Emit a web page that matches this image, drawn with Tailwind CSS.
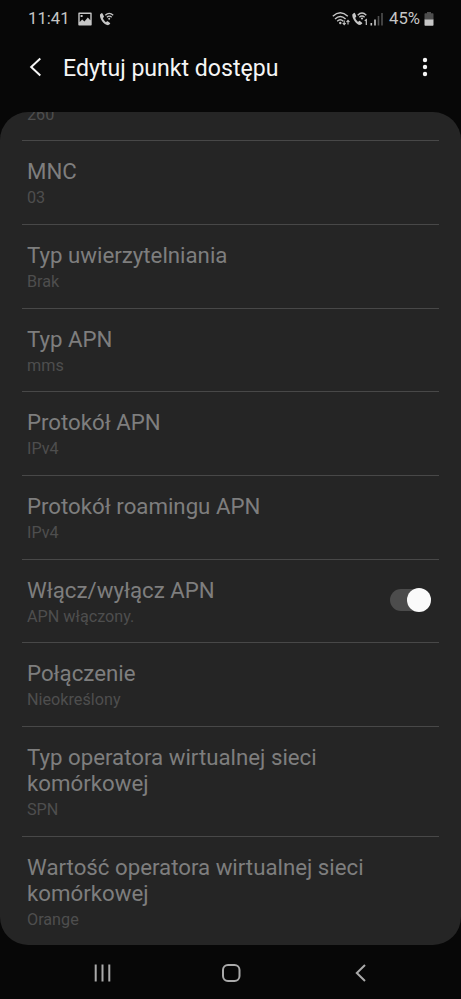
<!DOCTYPE html>
<html lang="pl">
<head>
<meta charset="utf-8">
<title>Edytuj punkt dostępu</title>
<script src="https://cdn.jsdelivr.net/npm/@tailwindcss/browser@4"></script>
</head>
<body class="bg-[#070707]">
<div class="w-[461px] h-[999px] flex flex-col overflow-hidden bg-[#070707] font-[Roboto,sans-serif]">
  <header class="h-[38px] shrink-0 flex items-center pl-7 pr-[27px] text-[16.700px] leading-none text-[#c6c6c6]">
    <span class="w-[41px] pt-px">11:41</span>
    <svg class="ml-[9px]" width="14" height="14" viewBox="0 0 14 14"><path fill="#c6c6c6" fill-rule="evenodd" d="M1 .5h12q.7 0 .7.7v11.6q0 .7-.7.7H1q-.7 0-.7-.7V1.200Q.3.5 1 .5ZM1.700 1.900v8.200l2.500-2.700 2.200 2 3.400-3.800 2.500 2.700V1.900ZM2.600 3h2v2h-2Z"/></svg>
    <svg class="ml-[7px]" width="15" height="14" viewBox="0 0 15 14" fill="none" stroke="#c6c6c6"><path fill="#c6c6c6" stroke="none" d="M2.400 1.200 1 2.500C.3 6.500 4.800 12.700 9 13.200l2-1.200q.4-.5 0-1L8.700 9.300q-.5-.3-1 .1l-.8.8C5.500 9.300 4.300 7.500 3.900 6l.8-.8q.4-.4.200-.9L3.500 1.400q-.4-.6-1.100-.2Z"/><path stroke-width="1.300" d="M6.300 3.300Q10.200-.5 14.200 3.300M7.900 5.200Q10.200 3 12.700 5.200"/><circle cx="10.200" cy="6.700" r="1" fill="#c6c6c6" stroke="none"/></svg>
    <div class="ml-auto flex items-center">
      <svg width="54" height="16" viewBox="0 0 54 16" fill="none" stroke="#c6c6c6">
        <path stroke-width="1.400" d="M.8 5.300Q8.300-1.700 15.800 5.300M3 7.900Q8.300 3 13.600 7.900M5.200 10.200Q8.300 7.400 11.200 10.200"/><circle cx="8.300" cy="12" r="1.200" fill="#c6c6c6" stroke="none"/>
        <path stroke-width="1.100" d="M12.200 9.500v4M10.700 12l1.500 1.700 1.500-1.700M16 13.500v-4M14.500 11 16 9.300 17.500 11"/>
        <path fill="#c6c6c6" stroke="none" d="M21.900 2 20.300 3.400c-.4 3.800 3.700 10 7.800 10.600l2-1.300q.4-.5 0-1L27.900 10q-.5-.3-1 .1l-.8.8c-1.300-.8-2.500-2.600-2.900-4.100l.8-.8q.4-.4.200-.9L23 2.200q-.4-.6-1.100-.2Z"/>
        <path stroke-width="1.400" d="M25.700 4.200Q30 0 34.300 4.200M27.400 6.200Q30 3.800 32.600 6.200"/><circle cx="30" cy="7.500" r="1.100" fill="#c6c6c6" stroke="none"/>
        <path stroke-width="1.200" d="M32.700 9.700 34.300 8.600V14"/>
        <path stroke-width="1.600" d="M39.300 12V14.500M43 8.500V14.500"/><path stroke="#505050" stroke-width="1.600" d="M46.500 5V14.500M50 2V14.500"/>
      </svg>
      <span class="ml-[3px] pt-px">45%</span>
      <svg class="ml-[4px]" width="10" height="14" viewBox="0 0 10 14"><path fill="#4e4e4e" d="M3 0h4v1.300h1.800q.7 0 .7.700V8H.5V2q0-.7.7-.7H3Z"/><path fill="#c6c6c6" d="M.5 7.500h9V13q0 .7-.7.700H1.200q-.7 0-.7-.7Z"/></svg>
    </div>
  </header>
  <div class="h-[74px] shrink-0 flex items-start pt-[15px] pl-[29px] pr-[33px]">
    <svg class="mt-[4px]" width="14" height="20" viewBox="0 0 14 20" fill="none" stroke="#f5f5f5" stroke-width="2"><path d="M11.300 1.500 2.200 10l9.100 8.500"/></svg>
    <h1 class="mt-px ml-[20px] text-[23.100px] leading-[30px] text-[#f5f5f5] whitespace-nowrap">Edytuj punkt dostępu</h1>
    <svg class="ml-auto mt-[4px]" width="6" height="20" viewBox="0 0 6 20" fill="#f5f5f5"><circle cx="3" cy="3" r="2.200"/><circle cx="3" cy="10" r="2.200"/><circle cx="3" cy="17" r="2.200"/></svg>
  </div>
  <main class="h-[833px] shrink-0 rounded-[28px] bg-[#252525] overflow-hidden px-[22px] text-[22.250px] leading-[26px] text-[#7e7e7e]">
    <div class="h-[29.300px] border-b border-[#484848] pl-[5px] flex flex-col justify-end pb-[16px]"><p class="text-[16.200px] leading-[19px] text-[#4e4e4e]">260</p></div>
    <div class="h-[83.700px] border-b border-[#484848] pl-[5px] pt-[17px]"><h2>MNC</h2><p class="mt-[4px] text-[16.200px] leading-[19px] text-[#4e4e4e]">03</p></div>
    <div class="h-[83.700px] border-b border-[#484848] pl-[5px] pt-[17px]"><h2>Typ uwierzytelniania</h2><p class="mt-[4px] text-[16.200px] leading-[19px] text-[#4e4e4e]">Brak</p></div>
    <div class="h-[83.700px] border-b border-[#484848] pl-[5px] pt-[17px]"><h2>Typ APN</h2><p class="mt-[4px] text-[16.200px] leading-[19px] text-[#4e4e4e]">mms</p></div>
    <div class="h-[83.700px] border-b border-[#484848] pl-[5px] pt-[17px]"><h2>Protokół APN</h2><p class="mt-[4px] text-[16.200px] leading-[19px] text-[#4e4e4e]">IPv4</p></div>
    <div class="h-[83.700px] border-b border-[#484848] pl-[5px] pt-[17px]"><h2>Protokół roamingu APN</h2><p class="mt-[4px] text-[16.200px] leading-[19px] text-[#4e4e4e]">IPv4</p></div>
    <div class="h-[83.700px] border-b border-[#484848] pl-[5px] pt-[17px] pr-[8px] flex justify-between">
      <div><h2>Włącz/wyłącz APN</h2><p class="mt-[4px] text-[16.200px] leading-[19px] text-[#4e4e4e]">APN włączony.</p></div>
      <div class="mt-[12px] w-[41px] h-[22px] rounded-full bg-[#4c4c4c] flex items-center justify-end"><div class="size-6 shrink-0 rounded-full bg-[#fafafa]"></div></div>
    </div>
    <div class="h-[83.700px] border-b border-[#484848] pl-[5px] pt-[17px]"><h2>Połączenie</h2><p class="mt-[4px] text-[16.200px] leading-[19px] text-[#4e4e4e]">Nieokreślony</p></div>
    <div class="h-[109.400px] border-b border-[#484848] pl-[5px] pt-[17px]"><h2>Typ operatora wirtualnej sieci<br>komórkowej</h2><p class="mt-[4px] text-[16.200px] leading-[19px] text-[#4e4e4e]">SPN</p></div>
    <div class="h-[109px] pl-[5px] pt-[17.500px]"><h2>Wartość operatora wirtualnej sieci<br>komórkowej</h2><p class="mt-[4px] text-[16.200px] leading-[19px] text-[#4e4e4e]">Orange</p></div>
  </main>
  <nav class="flex-1 flex items-start pt-[18px] pl-[94px]">
    <svg width="17" height="20" viewBox="0 0 17 20" stroke="#aaa" stroke-width="2"><path d="M1.700 1.500v17M8.500 1.500v17M15.300 1.500v17"/></svg>
    <svg class="ml-[110px]" width="20" height="20" viewBox="0 0 20 20" fill="none" stroke="#aaa" stroke-width="2"><rect x="2" y="2" width="16.500" height="16" rx="5"/></svg>
    <svg class="ml-[113px]" width="13" height="20" viewBox="0 0 13 20" fill="none" stroke="#aaa" stroke-width="2"><path d="M11 2 2.800 10l8.200 8"/></svg>
  </nav>
</div>
</body>
</html>
